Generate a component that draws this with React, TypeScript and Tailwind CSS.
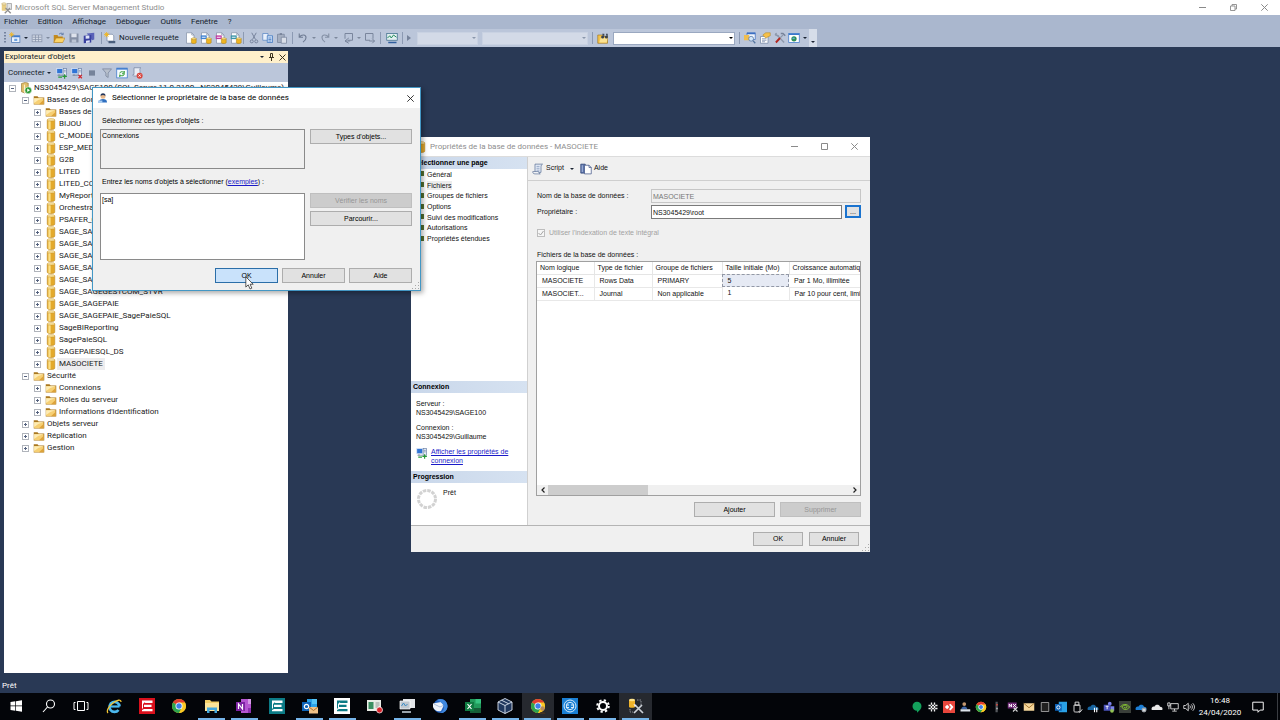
import React from "react";

const UI = "font-['Roboto','Noto_Sans',sans-serif]";
const MS = "font-['Liberation_Sans',Arial,sans-serif]";

function Svg({ children, className = "h-3 w-3" }: { children: React.ReactNode; className?: string }) {
  return (
    <svg viewBox="0 0 16 16" className={`shrink-0 ${className}`} fill="none" aria-hidden="true">
      {children}
    </svg>
  );
}

/* ---------- shared drawings ---------- */

const Cylinder = ({ className = "h-3 w-3" }: { className?: string }) => (
  <Svg className={className}>
    <path d="M3 2.500v11c0 1.200 2 1.800 5 1.800s5-.6 5-1.800v-11z" fill="#e3a92b" stroke="#c08a20" strokeWidth=".8" />
    <path d="M4.500 3.500v11c1 .3 2 .4 3 .4V3.500z" fill="#fbe08a" />
    <ellipse cx="8" cy="2.500" rx="5" ry="1.600" fill="#fdebae" stroke="#c8932a" strokeWidth=".8" />
  </Svg>
);

const Folder = () => (
  <Svg className="h-3 w-3">
    <path d="M1 3h5l1.500 1.500H15V14H1z" fill="#a9771f" />
    <path d="M1.500 5.500H14V13.500H1.500z" fill="#f6cf73" />
    <path d="M1.500 5.500H14L7 8 1.500 12z" fill="#fdebb3" />
    <path d="M8 13.500 14 8v5.500z" fill="#dda33a" />
  </Svg>
);

const ServerIcon = () => (
  <Svg className="h-3 w-3">
    <path d="M2 2l5-1.500 4 1v11l-5 2-4-1.500z" fill="#e0bd68" stroke="#8c6d2b" strokeWidth=".8" />
    <path d="M6 3.500v11" stroke="#fbf0c8" strokeWidth="1.500" />
    <circle cx="11" cy="11" r="4.500" fill="#2d9a35" stroke="#e6f5e2" strokeWidth=".8" />
    <path d="M9.700 8.800 13.300 11l-3.600 2.200z" fill="#fff" />
  </Svg>
);

const Monitors = ({ mark }: { mark: "plus" | "x" }) => (
  <Svg>
    <rect x="1" y="2" width="8" height="7" fill="#2f74d6" stroke="#dfe8f7" />
    <path d="M2 11h7M4 9.500v2" stroke="#6b7b96" />
    <rect x="9.500" y="2" width="4.500" height="9" fill="#e8edf6" stroke="#57709b" strokeWidth=".8" />
    <path d="M10.500 4.500h2.500M10.500 6.500h2.500" stroke="#57709b" strokeWidth=".8" />
    {mark === "plus" ? (
      <path d="M11.500 9.500v6M8.500 12.500h6M3 13.500h5" stroke="#259a35" strokeWidth="1.500" />
    ) : (
      <path d="m10 10.500 4.500 4.500m0-4.500L10 15" stroke="#d3262c" strokeWidth="1.700" />
    )}
  </Svg>
);

const Doc = ({ accent }: { accent?: string }) => (
  <Svg className="h-3 w-3">
    <path d="M2 1h7l3 3v11H2z" fill="#fff" stroke="#8794aa" />
    <path d="M9 1v3h3" stroke="#8794aa" />
    {accent && <path d="M1 4.500h8v5H1z" fill={accent} />}
    {accent && <path d="M2.500 7h5" stroke="#fff" strokeWidth="1.200" />}
    <path d="M8.500 9v5.200c0 .6 1.200 1.100 3.200 1.100s3.200-.5 3.200-1.100V9z" fill="#f0b521" stroke="#a97f16" strokeWidth=".7" />
    <ellipse cx="11.700" cy="9" rx="3.200" ry="1.200" fill="#fde48d" stroke="#a97f16" strokeWidth=".6" />
  </Svg>
);

const Caret = ({ faded = false }: { faded?: boolean }) => (
  <svg viewBox="0 0 4 2" className="h-[2px] w-[4px] shrink-0" aria-hidden="true">
    <path d="M0 0h4L2 2z" fill={faded ? "#7d889c" : "#1b2433"} />
  </svg>
);

/* ---------- toolbar ---------- */

function ToolButton({ label, children }: { label: string; children: React.ReactNode }) {
  return (
    <button type="button" aria-label={label} className="flex h-3 shrink-0 items-center justify-center">
      {children}
    </button>
  );
}

function Combo({ label, className, arrow }: { label: string; className: string; arrow: string }) {
  return (
    <div className="grid items-center">
      <select aria-label={label} className={`col-start-1 row-start-1 h-[13px] appearance-none ${className}`}>
        <option></option>
      </select>
      <svg viewBox="0 0 4 2" className={`pointer-events-none col-start-1 row-start-1 mr-0.5 h-[2px] w-1 justify-self-end ${arrow}`} aria-hidden="true">
        <path d="M0 0h4L2 2z" fill="currentColor" />
      </svg>
    </div>
  );
}

const GROUP = "flex h-3 shrink-0 items-center justify-between border-l border-[#8c9ab3]";

function Toolbar() {
  return (
    <div className="flex h-[18px] shrink-0 items-center overflow-hidden bg-[#aab7ce]">
      <div className="flex h-full items-center bg-[#bbc6da]">
        <div className="flex w-[101px] items-center justify-between pr-[6px] pl-1">
          <svg viewBox="0 0 2 12" className="h-3 w-0.5" aria-hidden="true">
            <path d="M1 0v12" stroke="#5f6e8a" strokeWidth="1.500" strokeDasharray="1.500 1.500" />
          </svg>
          <ToolButton label="Nouveau projet">
            <Svg>
              <rect x="3.500" y="5" width="11" height="9" fill="#eaf1fb" stroke="#4c78b5" />
              <path d="M3.500 6h11" stroke="#3d7bd0" strokeWidth="2" />
              <rect x="7" y="9" width="4" height="3" fill="#6da2e0" />
              <path d="M3.500 0v7M0 3.500h7M1 1l5 5M6 1 1 6" stroke="#f3b61c" />
            </Svg>
          </ToolButton>
          <Caret />
          <ToolButton label="Ajouter un élément">
            <Svg>
              <rect x="1.500" y="4" width="13" height="9" fill="#d3dae6" stroke="#8793aa" />
              <path d="M2 7h12M2 10h12M6 4v9M10 4v9" stroke="#8793aa" />
            </Svg>
          </ToolButton>
          <Caret faded />
          <ToolButton label="Ouvrir">
            <Svg>
              <path d="M1 4h5l1 2h6v8H1z" fill="#c48a1c" />
              <path d="m1 14 3-6h12l-3 6z" fill="#fbd367" stroke="#a9781d" strokeWidth=".7" />
              <path d="M8 3c2-2 4-2 5 0m.5-2v2.500H11" stroke="#49689c" />
            </Svg>
          </ToolButton>
          <ToolButton label="Enregistrer">
            <Svg>
              <path d="M2 2h12v12H2z" fill="#8590a6" />
              <path d="M4.500 2h7v5h-7z" fill="#dde2ec" />
              <path d="M5 10h6v4H5z" fill="#bbc4d4" />
            </Svg>
          </ToolButton>
          <ToolButton label="Enregistrer tout">
            <Svg>
              <path d="m5 2 10-1v9l-3 1z" fill="#5a62b8" />
              <path d="m1 5 10-1v10l-10 1z" fill="#373f9f" />
              <path d="m3.500 5 5-.5v4l-5 .5zM4 11.500l5-.5v3l-5 .5z" fill="#dde2f8" />
            </Svg>
          </ToolButton>
        </div>

        <div className={`${GROUP} w-[142px] pl-0.5`}>
          <button type="button" className="flex items-center gap-[3px] text-[8px] leading-3 whitespace-nowrap text-[#141c2a]">
            <Svg>
              <path d="M4 3h7l2 2v7H4z" fill="#fff" stroke="#7a8aa5" />
              <path d="M6 12v3h9v-3z" fill="#4b5f7e" />
              <path d="M3.500 0v7M0 3.500h7M1 1l5 5M6 1 1 6" stroke="#f3b61c" strokeWidth="1.200" />
            </Svg>
            Nouvelle requête
          </button>
          <div className="flex w-[60px] justify-around">
            <ToolButton label="Requête moteur de base de données"><Doc /></ToolButton>
            <ToolButton label="Requête MDX"><Doc accent="#3f82d2" /></ToolButton>
            <ToolButton label="Requête DMX"><Doc accent="#c03aa2" /></ToolButton>
            <ToolButton label="Requête XMLA"><Doc accent="#3a94a8" /></ToolButton>
          </div>
        </div>

        <div className={`${GROUP} w-[49px] px-1`}>
          <ToolButton label="Couper">
            <Svg>
              <path d="M5 1l5 9M11 1 6 10" stroke="#75829a" strokeWidth="1.300" />
              <circle cx="5" cy="12.500" r="2" stroke="#75829a" strokeWidth="1.300" />
              <circle cx="11" cy="12.500" r="2" stroke="#75829a" strokeWidth="1.300" />
            </Svg>
          </ToolButton>
          <ToolButton label="Copier">
            <Svg>
              <path d="M1 2h7v9H1z" fill="#e7effb" stroke="#5b87c4" />
              <path d="M7 5h7v9H7z" fill="#cfe0f7" stroke="#3e75bf" />
              <path d="M8.500 8h4M8.500 10h4M8.500 12h4" stroke="#3e75bf" />
            </Svg>
          </ToolButton>
          <ToolButton label="Coller">
            <Svg>
              <path d="M2 3h9v11H2z" fill="#a5afc1" stroke="#78849b" />
              <path d="M5 1.500h3V4H5z" fill="#78849b" />
              <path d="M7 7h7v8H7z" fill="#d9dee8" stroke="#78849b" />
            </Svg>
          </ToolButton>
        </div>

        <div className={`${GROUP} w-[88px] px-1`}>
          <ToolButton label="Annuler">
            <Svg><path d="M3 2v5h5M3.500 6.500C6 3 12 3 12 7.500c0 2.500-2 4.500-4 6" stroke="#6f7c94" strokeWidth="1.500" /></Svg>
          </ToolButton>
          <Caret faded />
          <ToolButton label="Rétablir">
            <Svg><path d="M13 2v5H8M12.500 6.500C10 3 4 3 4 7.500c0 2.500 2 4.500 4 6" stroke="#8591a6" strokeWidth="1.500" /></Svg>
          </ToolButton>
          <Caret faded />
          <ToolButton label="Naviguer vers l'arrière">
            <Svg>
              <path d="M4 2h10v9H8" stroke="#78849b" strokeWidth="1.300" />
              <path d="M4 2v7M9 8l-5 4 5 3M4 12h7" stroke="#78849b" strokeWidth="1.300" />
            </Svg>
          </ToolButton>
          <Caret faded />
          <ToolButton label="Naviguer vers l'avant">
            <Svg>
              <path d="M2 2h10v7M2 2v9h6" stroke="#78849b" strokeWidth="1.300" />
              <path d="M7 12h7m-3-3 3 3-3 3" stroke="#78849b" strokeWidth="1.300" />
            </Svg>
          </ToolButton>
        </div>

        <div className={`${GROUP} w-[22px] justify-center`}>
          <ToolButton label="Moniteur d'activité">
            <Svg>
              <rect x="1" y="2" width="14" height="9" fill="#e3f0f1" stroke="#3d6d8b" />
              <path d="M2 8l3-3 2 3 3-4 4 3" stroke="#1f8a5a" strokeWidth="1.300" />
              <path d="M3 14h11" stroke="#2f5e9e" strokeWidth="2" />
            </Svg>
          </ToolButton>
        </div>

        <div className={`${GROUP} w-[190px] pr-1 pl-1`}>
          <ToolButton label="Démarrer">
            <svg viewBox="0 0 4 6" className="h-[6px] w-[4px]" aria-hidden="true"><path d="M0 0l4 3-4 3z" fill="#76839b" /></svg>
          </ToolButton>
          <div className="flex gap-1">
            <Combo label="Configuration" arrow="text-[#8b97ac]" className="w-[61px] border border-[#c9d2e2] bg-[#d3dae7]" />
            <Combo label="Plateforme" arrow="text-[#8b97ac]" className="w-[106px] border border-[#c9d2e2] bg-[#d3dae7]" />
          </div>
        </div>

        <div className={`${GROUP} w-[147px] pr-1 pl-1`}>
          <ToolButton label="Rechercher dans les fichiers">
            <Svg>
              <path d="M1 4h6l1 2h6v9H1z" fill="#f4c34b" stroke="#9a6e17" strokeWidth=".8" />
              <path d="m3 14 2-6h9l-1 6z" fill="#fae293" />
              <circle cx="7.500" cy="6.500" r="2" fill="#39424f" />
              <circle cx="12.500" cy="6.500" r="2" fill="#39424f" />
              <path d="M7 3h2v3M12 3h1.500v3" stroke="#39424f" strokeWidth="1.500" />
            </Svg>
          </ToolButton>
          <Combo label="Rechercher" arrow="text-black" className="w-[122px] border border-[#9aa8c0] bg-white" />
        </div>

        <div className={`${GROUP} w-[70px] pr-0.5 pl-1`}>
          <ToolButton label="Explorateur d'objets">
            <Svg>
              <path d="M4 1h11v9H4z" fill="#f1f5fc" stroke="#3b6fc2" />
              <path d="M4 2h11" stroke="#3b6fc2" strokeWidth="2" />
              <path d="M0 4h7v7H0z" fill="#f0be4f" />
              <circle cx="9.500" cy="9" r="3.200" fill="#d4e8fa" stroke="#54749f" />
              <path d="m12 11.500 3 3.500" stroke="#54749f" strokeWidth="1.700" />
            </Svg>
          </ToolButton>
          <ToolButton label="Fenêtre Propriétés">
            <Svg>
              <path d="M2 6h10v9H2z" fill="#fff" stroke="#7688a5" />
              <path d="M4 9h6M4 11h6M4 13h4" stroke="#7688a5" />
              <path d="M5 4 9 1h6v4L9 8z" fill="#f5c04a" stroke="#b0821f" strokeWidth=".7" />
            </Svg>
          </ToolButton>
          <ToolButton label="Boîte à outils">
            <Svg>
              <path d="m4 4 9.500 10" stroke="#8d98ab" strokeWidth="1.800" />
              <path d="M1 4c0-2 1-3 3-3L3.500 3l1.500 1.500L7 4c0 2-3 3-6 0z" fill="#8d98ab" />
              <path d="M12 4 7 9" stroke="#8d98ab" strokeWidth="1.500" />
              <path d="M8 8 2.500 14" stroke="#b3261f" strokeWidth="2.500" />
              <path d="M9 2h3l3 3" stroke="#77839a" strokeWidth="2" />
            </Svg>
          </ToolButton>
          <ToolButton label="Navigateur web">
            <Svg>
              <rect x="1" y="2" width="14" height="12" fill="#fff" stroke="#3b78cc" />
              <path d="M1 3h14" stroke="#3b78cc" strokeWidth="2" />
              <circle cx="8" cy="9" r="3.500" fill="#2d8f56" />
              <path d="M6 7.500h3v2H6z" fill="#5fb0df" />
            </Svg>
          </ToolButton>
          <Caret />
        </div>
        <button type="button" aria-label="Options de barre d'outils" className="flex h-full w-2 items-end justify-center bg-[#d6dde9] pb-1">
          <Caret />
        </button>
      </div>
    </div>
  );
}

/* ---------- object explorer ---------- */

type Kind = "server" | "folder" | "db";
type Node = { level: 0 | 1 | 2; open?: boolean; kind: Kind; label: string; selected?: boolean };

const TREE: Node[] = [
  { level: 0, open: true, kind: "server", label: "NS3045429\\SAGE100 (SQL Server 11.0.2100 - NS3045429\\Guillaume)" },
  { level: 1, open: true, kind: "folder", label: "Bases de données" },
  { level: 2, kind: "folder", label: "Bases de données système" },
  { level: 2, kind: "db", label: "BIJOU" },
  { level: 2, kind: "db", label: "C_MODEL" },
  { level: 2, kind: "db", label: "ESP_MED" },
  { level: 2, kind: "db", label: "G2B" },
  { level: 2, kind: "db", label: "LITED" },
  { level: 2, kind: "db", label: "LITED_CO" },
  { level: 2, kind: "db", label: "MyReport" },
  { level: 2, kind: "db", label: "Orchestra" },
  { level: 2, kind: "db", label: "PSAFER_C" },
  { level: 2, kind: "db", label: "SAGE_SAGE" },
  { level: 2, kind: "db", label: "SAGE_SAGE" },
  { level: 2, kind: "db", label: "SAGE_SAGE" },
  { level: 2, kind: "db", label: "SAGE_SAGE" },
  { level: 2, kind: "db", label: "SAGE_SAGE" },
  { level: 2, kind: "db", label: "SAGE_SAGEGESTCOM_STVR" },
  { level: 2, kind: "db", label: "SAGE_SAGEPAIE" },
  { level: 2, kind: "db", label: "SAGE_SAGEPAIE_SagePaieSQL" },
  { level: 2, kind: "db", label: "SageBIReporting" },
  { level: 2, kind: "db", label: "SagePaieSQL" },
  { level: 2, kind: "db", label: "SAGEPAIESQL_DS" },
  { level: 2, kind: "db", label: "MASOCIETE", selected: true },
  { level: 1, open: true, kind: "folder", label: "Sécurité" },
  { level: 2, kind: "folder", label: "Connexions" },
  { level: 2, kind: "folder", label: "Rôles du serveur" },
  { level: 2, kind: "folder", label: "Informations d'identification" },
  { level: 1, kind: "folder", label: "Objets serveur" },
  { level: 1, kind: "folder", label: "Réplication" },
  { level: 1, kind: "folder", label: "Gestion" },
];

const INDENT = ["pl-[5px]", "pl-[18px]", "pl-[30px]"];

function TreeRow({ node }: { node: Node }) {
  return (
    <li
      role="treeitem"
      aria-level={node.level + 1}
      aria-expanded={!!node.open}
      aria-selected={!!node.selected}
      className={`flex h-3 items-center overflow-hidden ${INDENT[node.level]}`}
    >
      <svg viewBox="0 0 7 7" className="mr-1 h-[7px] w-[7px] shrink-0" aria-hidden="true">
        <rect x=".5" y=".5" width="6" height="6" fill="#fff" stroke="#b0b4bb" />
        <path d={node.open ? "M2 3.500h3" : "M2 3.500h3M3.500 2v3"} stroke="#56637f" />
      </svg>
      {node.kind === "server" ? <ServerIcon /> : node.kind === "folder" ? <Folder /> : <Cylinder />}
      <span className={`px-0.5 leading-3 whitespace-nowrap ${node.selected ? "bg-[#ededef]" : ""}`}>{node.label}</span>
    </li>
  );
}

function ObjectExplorer() {
  return (
    <section aria-label="Explorateur d'objets" className="flex w-[284px] shrink-0 flex-col text-[8px] text-[#1a1a1a]">
      <header className="flex h-3 shrink-0 items-center bg-[#fff0cb] pr-0.5 pl-px">
        <h2 className="flex-1 leading-3 text-[#141c2a]">Explorateur d'objets</h2>
        <div className="flex items-center gap-1">
          <button type="button" aria-label="Position de la fenêtre"><Caret /></button>
          <button type="button" aria-label="Masquer automatiquement">
            <svg viewBox="0 0 7 8" className="h-2 w-[7px]" aria-hidden="true">
              <path d="M2.500.5h2v4h-2zM1 4.500h5M3.500 4.500V8" stroke="#3c3420" fill="none" />
            </svg>
          </button>
          <button type="button" aria-label="Fermer">
            <svg viewBox="0 0 7 7" className="h-[7px] w-[7px]" aria-hidden="true"><path d="m.5.5 6 6m0-6-6 6" stroke="#3c3420" /></svg>
          </button>
        </div>
      </header>
      <div className="flex h-[19px] shrink-0 items-center gap-[3px] bg-[#bbc6da] px-1 pt-px">
        <button type="button" className="mr-0.5 flex items-center gap-0.5 leading-3 text-[#141c2a]">Connecter <Caret /></button>
        <ToolButton label="Connecter l'Explorateur"><Monitors mark="plus" /></ToolButton>
        <ToolButton label="Déconnecter"><Monitors mark="x" /></ToolButton>
        <ToolButton label="Arrêter"><Svg><rect x="4" y="4.500" width="8" height="7" fill="#76839a" /></Svg></ToolButton>
        <ToolButton label="Filtrer"><Svg><path d="M2 2.500h12L9.500 8v6l-3-2V8z" fill="#b7bfcc" stroke="#78849b" /></Svg></ToolButton>
        <ToolButton label="Actualiser">
          <Svg>
            <rect x="1" y="1.500" width="14" height="13" fill="#f6fbff" stroke="#3b78cc" />
            <path d="M1 2.500h14" stroke="#3b78cc" strokeWidth="2" />
            <path d="M5 8.500c0-2 3-3 5-1.500l1-1.500V9H8M11 9.500c0 2-3 3-5 1.500L5 13v-3" stroke="#2f9a2f" strokeWidth="1.300" />
          </Svg>
        </ToolButton>
        <ToolButton label="Script">
          <Svg>
            <path d="M4 1h9c-2 1-1 3-1 5v6H4c-2 0-2-2-1-2h1z" fill="#e8edf5" stroke="#7786a1" />
            <circle cx="11.500" cy="11.500" r="4" fill="#d8463e" />
            <path d="m10 10 3 3m0-3-3 3" stroke="#fff" strokeWidth="1.200" />
          </Svg>
        </ToolButton>
      </div>
      <ul role="tree" className="flex-1 overflow-hidden bg-white">
        {TREE.map((n, i) => <TreeRow key={i} node={n} />)}
      </ul>
    </section>
  );
}

/* ---------- dialogs ---------- */

const BTN = "border border-[#adadad] bg-[#e1e1e1] text-center leading-[10px] text-black";
const BTN_OFF = "border border-[#bfbfbf] bg-[#cccccc] text-center leading-[10px] text-[#969696]";

const Grip = () => (
  <svg viewBox="0 0 8 8" className="h-2 w-2" aria-hidden="true">
    <path d="M6 0h1v1H6zM3 3h1v1H3zM6 3h1v1H6zM0 6h1v1H0zM3 6h1v1H3zM6 6h1v1H6z" fill="#a9a9a9" />
  </svg>
);

function OwnerDialog() {
  return (
    <div role="dialog" aria-label="Sélectionner le propriétaire" className="absolute top-10 left-[92px] flex w-[329px] flex-col border border-[#4397c4] bg-[#f0f0f0] text-[7px] shadow-[2px_2px_5px_rgba(0,0,0,0.35)]">
      <div className={`flex h-5 items-center gap-1 bg-white px-[5px] ${UI}`}>
        <Svg className="h-[10px] w-[10px]">
          <circle cx="8" cy="5" r="4" fill="#e9b98c" />
          <path d="M4 4.500C4 1.500 6 .5 8 .5s4 1 4 4L8 3z" fill="#23365c" />
          <path d="M1.500 15c0-4 3-5.500 6.500-5.500s6.500 1.500 6.500 5.500z" fill="#2f6fc0" />
          <path d="M0 12h7v4H0z" fill="#a9cdf2" />
        </Svg>
        <h2 className="flex-1 text-[8px] leading-3 whitespace-nowrap text-black">Sélectionner le propriétaire de la base de données</h2>
        <button type="button" aria-label="Fermer" className="mr-px">
          <svg viewBox="0 0 7 7" className="h-[7px] w-[7px]" aria-hidden="true"><path d="m.3.3 6.400 6.400m0-6.400L.3 6.700" stroke="#222" strokeWidth=".9" /></svg>
        </button>
      </div>
      <div className={`px-[7px] pt-2 ${MS}`}>
        <label htmlFor="types" className="block h-[13px] pl-0.5 leading-[10px]">Sélectionnez ces types d'objets :</label>
        <div className="flex items-start gap-[5px]">
          <textarea id="types" readOnly defaultValue="Connexions" className="block h-10 w-[205px] resize-none border border-[#8a8a8a] bg-[#f0f0f0] px-px pt-px leading-[10px]" />
          <button type="button" className={`${BTN} h-[15px] w-[102px]`}>Types d'objets...</button>
        </div>
        <div className="mt-2 h-4 pl-0.5 leading-[10px]">
          <label htmlFor="names">Entrez les noms d'objets à sélectionner (</label>
          <a href="#exemples" className="text-[#1a1ac8] underline">exemples</a>) :
        </div>
        <div className="flex items-start gap-[5px]">
          <textarea id="names" defaultValue="[sa]" className="block h-[67px] w-[205px] resize-none border border-[#8a8a8a] bg-white px-px pt-px leading-[10px]" />
          <div className="flex flex-col gap-[3px]">
            <button type="button" disabled className={`${BTN_OFF} h-[15px] w-[102px]`}>Vérifier les noms</button>
            <button type="button" className={`${BTN} h-[15px] w-[102px]`}>Parcourir...</button>
          </div>
        </div>
        <div className="mt-2 flex justify-end gap-1 pr-px pb-[7px]">
          <button type="button" className="h-[15px] w-[63px] border border-[#2b6ea8] bg-[#c9e2fb] text-center leading-[10px] text-black">OK</button>
          <button type="button" className={`${BTN} h-[15px] w-[63px]`}>Annuler</button>
          <button type="button" className={`${BTN} h-[15px] w-[63px]`}>Aide</button>
        </div>
      </div>
      <div className="absolute right-0 bottom-0"><Grip /></div>
      <svg viewBox="0 0 12 19" className="absolute top-[188px] left-[152px] h-[14px] w-[9px]" aria-hidden="true">
        <path d="M1 1v14l3.300-3 2.400 5.600 2.500-1.100-2.400-5.300H11z" fill="#fff" stroke="#222" />
      </svg>
    </div>
  );
}

const PAGES = ["Général", "Fichiers", "Groupes de fichiers", "Options", "Suivi des modifications", "Autorisations", "Propriétés étendues"];
const HEADS = ["Nom logique", "Type de fichier", "Groupe de fichiers", "Taille initiale (Mo)", "Croissance automatique"];
const ROWS = [
  ["MASOCIETE", "Rows Data", "PRIMARY", "5", "Par 1 Mo, illimitée"],
  ["MASOCIET...", "Journal", "Non applicable", "1", "Par 10 pour cent, limitée"],
];
const SECTION = "h-3 shrink-0 bg-linear-to-r from-[#c9d7ea] to-[#d6e2f1] pl-0.5 font-bold leading-3 text-black";

function PropertiesDialog() {
  return (
    <div role="dialog" aria-label="Propriétés de la base de données" className={`absolute top-[90px] left-[411px] flex h-[415px] w-[459px] flex-col bg-[#f0f0f0] text-[7px] text-[#111] ${MS}`}>
      <div className={`flex h-5 shrink-0 items-center border-b border-[#dcdcdc] bg-white pr-3 pl-[4px] ${UI}`}>
        <Cylinder />
        <h2 className="flex-1 pl-[3px] text-[8px] leading-3 whitespace-nowrap text-[#8e8e8e]">Propriétés de la base de données - MASOCIETE</h2>
        <div className="flex items-center gap-[23px]">
          <button type="button" aria-label="Réduire"><svg viewBox="0 0 7 7" className="h-[7px] w-[7px]" aria-hidden="true"><path d="M0 3.500h7" stroke="#8a8a8a" /></svg></button>
          <button type="button" aria-label="Agrandir"><svg viewBox="0 0 7 7" className="h-[7px] w-[7px]" aria-hidden="true"><path d="M.5.5h6v6h-6z" fill="none" stroke="#8a8a8a" /></svg></button>
          <button type="button" aria-label="Fermer"><svg viewBox="0 0 7 7" className="h-[7px] w-[7px]" aria-hidden="true"><path d="m.3.3 6.400 6.400m0-6.400L.3 6.700" stroke="#8a8a8a" /></svg></button>
        </div>
      </div>

      <div className="flex min-h-0 flex-1 border-b border-[#b4b4b4]">
        <nav aria-label="Sélectionner une page" className="flex w-[117px] shrink-0 flex-col border-r border-[#d0d0d0] bg-white">
          <h3 className={SECTION}>Sélectionner une page</h3>
          <ul className="flex h-[75px] shrink-0 flex-col">
            {PAGES.map((p) => (
              <li key={p} className="flex flex-1 items-center gap-[3px] pl-[5px]">
                <svg viewBox="0 0 8 8" className="h-2 w-2" aria-hidden="true">
                  <path d="M0 1h8v5H0z" fill="#55702f" /><path d="M1 2h4v2H1z" fill="#c9d68b" /><path d="M0 6h4v1H0z" fill="#8a8a5a" />
                </svg>
                <button type="button" className={`leading-[9px] ${p === "Fichiers" ? "bg-[#ececec]" : ""}`}>{p}</button>
              </li>
            ))}
          </ul>
          <div className="flex-1" />
          <h3 className={SECTION}>Connexion</h3>
          <div className="h-[78px] shrink-0 pt-[6px] pl-[5px] leading-[9px]">
            <p>Serveur :<br />NS3045429\SAGE100</p>
            <p className="mt-[6px]">Connexion :<br />NS3045429\Guillaume</p>
            <div className="mt-[6px] flex items-start gap-[3px]">
              <Monitors mark="plus" />
              <a href="#connexion" className="w-[90px] text-[#1a1ac8] underline">Afficher les propriétés de connexion</a>
            </div>
          </div>
          <h3 className={SECTION}>Progression</h3>
          <div className="flex h-[42px] shrink-0 items-start gap-[5px] pt-[5px] pl-[5px]">
            <svg viewBox="0 0 22 22" className="h-[22px] w-[22px]" aria-hidden="true">
              <circle cx="11" cy="11" r="8.500" fill="none" stroke="#d2d2d2" strokeWidth="3" strokeDasharray="3.450 1" />
            </svg>
            <span className="leading-[10px]">Prêt</span>
          </div>
        </nav>

        <div className="flex min-w-0 flex-1 flex-col">
          <div className="flex h-6 shrink-0 items-center gap-1 border-b border-[#cfcfcf] pl-1">
            <button type="button" className="flex items-center gap-0.5">
              <Svg>
                <path d="M4 1.500h10c-2 1-2 3-2 5v6H4z" fill="#e6edf8" stroke="#5e7398" />
                <path d="M1 11.500h8c0 2 1 3 2 3H4c-2 0-3-1-3-3z" fill="#fff" stroke="#5e7398" />
                <path d="M6 4.500h4M6 7h4M6 9.500h4" stroke="#7e93b7" />
              </Svg>
              Script
            </button>
            <button type="button" aria-label="Options de script" className="px-0.5"><Caret /></button>
            <button type="button" className="flex items-center gap-0.5">
              <Svg>
                <path d="M1 1.500h6v12H1z" fill="#5a73aa" stroke="#354a7a" />
                <path d="M6 3h6l3 3v8.500H6z" fill="#fff" stroke="#46588a" />
                <path d="M12 3v3h3" stroke="#46588a" />
                <path d="M3 3v9" stroke="#c9d4ee" />
              </Svg>
              Aide
            </button>
          </div>

          <div className="flex min-h-0 flex-1 flex-col pt-2 pr-[9px] pb-2 pl-2">
            <div className="grid grid-cols-[115px_1fr] items-center gap-y-0.5 leading-[10px]">
              <label htmlFor="nom" className="pl-px">Nom de la base de données :</label>
              <input id="nom" readOnly defaultValue="MASOCIETE" className="h-[14px] min-w-0 border border-[#c6c6c6] bg-[#f0f0f0] px-px text-[#777]" />
              <label htmlFor="owner" className="pl-px">Propriétaire :</label>
              <div className="flex min-w-0 gap-[3px]">
                <input id="owner" defaultValue="NS3045429\root" className="h-[14px] min-w-0 flex-1 border border-[#7a7a7a] bg-white px-px" />
                <button type="button" aria-label="Parcourir" className="h-[13px] w-4 border-2 border-[#1a73cf] bg-[#e1e1e1] leading-[6px]">...</button>
              </div>
            </div>
            <label className="mt-[9px] flex items-center gap-[3px] leading-[10px] text-[#a2a2a2]">
              <span className="grid h-[10px] w-[10px] place-items-center">
                <input type="checkbox" defaultChecked disabled className="col-start-1 row-start-1 h-2 w-2 appearance-none border border-[#bdbdbd] bg-[#f6f6f6]" />
                <svg viewBox="0 0 8 8" className="col-start-1 row-start-1 h-2 w-2" aria-hidden="true"><path d="m1.500 4 2 2 3-4" fill="none" stroke="#a5a5a5" /></svg>
              </span>
              Utiliser l'indexation de texte intégral
            </label>
            <h3 className="mt-3 pl-px leading-[10px]">Fichiers de la base de données :</h3>
            <div className="mt-px flex min-h-0 flex-1 flex-col overflow-hidden border border-[#a0a0a0] bg-white">
              <div className="min-h-0 flex-1 overflow-hidden">
                <table className="w-[372px] table-fixed border-collapse text-left leading-[10px]">
                  <colgroup>
                    <col className="w-[57px]" /><col className="w-[58px]" /><col className="w-[70px]" /><col className="w-[67px]" /><col className="w-[120px]" />
                  </colgroup>
                  <thead>
                    <tr>{HEADS.map((h) => <th key={h} className="h-3 border-r border-b border-[#e5e5e5] p-0 pl-[3px] font-normal whitespace-nowrap">{h}</th>)}</tr>
                  </thead>
                  <tbody>
                    {ROWS.map((r) => (
                      <tr key={r[0]}>
                        {r.map((c, i) => (
                          <td key={i} className={c === "5" ? "h-[13px] bg-[#e6eaf4] p-0 pl-[5px] outline outline-dashed outline-[#9298a6] -outline-offset-1" : "h-[13px] border-r border-b border-[#e8e8e8] p-0 pl-[5px] whitespace-nowrap"}>{c}</td>
                        ))}
                      </tr>
                    ))}
                  </tbody>
                </table>
              </div>
              <div className="flex h-[10px] shrink-0 items-center bg-[#f0f0f0]">
                <button type="button" aria-label="Défiler à gauche" className="flex w-[11px] justify-center"><svg viewBox="0 0 4 6" className="h-[6px] w-1" aria-hidden="true"><path d="M3.500.5 1 3l2.500 2.500" fill="none" stroke="#222" strokeWidth="1.200" /></svg></button>
                <div className="flex h-full flex-1"><div className="w-1/3 bg-[#cdcdcd]" /></div>
                <button type="button" aria-label="Défiler à droite" className="flex w-[11px] justify-center"><svg viewBox="0 0 4 6" className="h-[6px] w-1" aria-hidden="true"><path d="M.5.5 3 3 .5 5.500" fill="none" stroke="#222" strokeWidth="1.200" /></svg></button>
              </div>
            </div>
            <div className="mt-[6px] flex justify-end gap-[5px]">
              <button type="button" className={`${BTN} h-[15px] w-[81px]`}>Ajouter</button>
              <button type="button" disabled className={`${BTN_OFF} h-[15px] w-[81px]`}>Supprimer</button>
            </div>
          </div>
        </div>
      </div>

      <div className="flex h-[26px] shrink-0 items-center justify-end gap-[6px] pr-[11px]">
        <button type="button" className={`${BTN} h-[14px] w-[50px]`}>OK</button>
        <button type="button" className={`${BTN} h-[14px] w-[50px]`}>Annuler</button>
      </div>
      <div className="absolute right-0 bottom-0"><Grip /></div>
    </div>
  );
}

/* ---------- taskbar ---------- */

const ChromeMark = () => (
  <>
    <circle cx="8" cy="8" r="7" fill="#fbc924" />
    <path d="M8 8 1.940 4.500A7 7 0 0 1 14.060 4.500z" fill="#e23d30" />
    <path d="M8 8 1.940 4.500A7 7 0 0 0 8 15l3-5z" fill="#2da44e" />
    <path d="M8 4.500h6A7 7 0 0 1 8 15l3-5.500z" fill="#fbc924" />
    <circle cx="8" cy="8" r="3.500" fill="#fff" />
    <circle cx="8" cy="8" r="2.700" fill="#3f7fe8" />
  </>
);

const Ebars = ({ bg, fg }: { bg: string; fg: string }) => (
  <>
    <rect width="16" height="16" fill={bg} />
    <path d="M3 2.500h10.500V5H6.500L4.500 4zM5 6.700h7.500v2.300H5zM3 13.200V12l2-1h8.500v2.200zM3 2.500h2V5L4 6v4l-1 1z" fill={fg} />
  </>
);

type Task = { name: string; running?: boolean; active?: boolean; art: React.ReactNode };

const TASKS: Task[] = [
  { name: "Démarrer", art: <path d="M2.500 4 7.300 3.300v4.300H2.500zM8 3.200l6-.9v5.300H8zM2.500 8.300h4.800v4.400L2.500 12zM8 8.300h6v5.400l-6-.9z" fill="#fff" /> },
  { name: "Rechercher", art: <><circle cx="9.500" cy="6" r="4" stroke="#fff" strokeWidth="1.100" /><path d="M6.500 9 2 14" stroke="#fff" strokeWidth="1.100" /></> },
  { name: "Vue des tâches", art: <path d="M4.500 3.500h7v9h-7zM2.500 4.500H1v7h1.500M13.500 4.500H15v7h-1.500" stroke="#fff" /> },
  { name: "Internet Explorer", art: <><path d="M13.500 8.500a5 5 0 1 0-1 3.500" stroke="#4cb9ee" strokeWidth="2.700" /><path d="M4 8.500h9.500" stroke="#4cb9ee" strokeWidth="2.200" /><path d="M2 15c-2-2 1-7 5-10s8-4 8-1" stroke="#f3c534" strokeWidth="1.300" /></> },
  { name: "Sage rouge", art: <Ebars bg="#d9101c" fg="#fff" /> },
  { name: "Chrome", art: <ChromeMark /> },
  { name: "Explorateur de fichiers", running: true, art: <><path d="M1 2h5l1.500 1.500H15V13H1z" fill="#f1ce67" /><path d="M1 5h14v8H1z" fill="#fbe59a" /><path d="M3 9.500h10V15h-2.500v-3h-5v3H3z" fill="#43a8dd" /></> },
  { name: "OneNote", running: true, art: <><path d="M5 1h10v14H5z" fill="#b556d1" /><path d="M12 1h3v5h-3z" fill="#d79ae8" /><path d="M12 10h3v5h-3z" fill="#8b2fae" /><path d="M0 4h9v9H0z" fill="#7d22a3" /><path d="M2.500 11V6l4 5V6" stroke="#fff" strokeWidth="1.200" /></> },
  { name: "Sage vert", art: <Ebars bg="#0c7b86" fg="#fff" /> },
  { name: "Outlook", running: true, art: <><path d="M5 1h10v11H5z" fill="#2aa1e6" /><path d="M10 1h5v5h-5z" fill="#55c4f6" /><path d="M0 4h9v9H0z" fill="#0d63b8" /><circle cx="4.500" cy="8.500" r="2.200" stroke="#fff" strokeWidth="1.200" /><path d="M7 9h9v6.500H7z" fill="#f0c187" /><path d="m7 9 4.500 3.500L16 9" stroke="#a8712e" /></> },
  { name: "Sage blanc", running: true, art: <Ebars bg="#fff" fg="#0c7b86" /> },
  { name: "Enregistreur", art: <><path d="M0 2h14v11H0z" fill="#e9ece6" /><path d="M1.500 4h5v7h-5z" fill="#3c8f62" /><path d="M8.500 5h4M8.500 7h4M8.500 9h3" stroke="#8d9994" /><circle cx="12.500" cy="12" r="3" fill="#d9232b" stroke="#fff" strokeWidth=".7" /></> },
  { name: "Gestion serveur", running: true, art: <><path d="M4 1h12v9H4z" fill="#e3e6e9" /><path d="M1 3h10v8H1z" fill="#c0c8cf" stroke="#fff" strokeWidth=".7" /><path d="m2.500 8 2-3 2 3 2-2" stroke="#3c8dc7" /><path d="M3 13h9v2H3z" fill="#9aa3ab" /></> },
  { name: "Thunderbird", art: <><circle cx="8.500" cy="8" r="7" fill="#2563bd" /><path d="M1 5.500 9 4l3 3-3 6c-4 1-7-1-8-4z" fill="#eef3fa" /><path d="m2 6 6 3 4-2" stroke="#9fb4d3" strokeWidth=".8" /><path d="M5 2c5-3 11 1 10.500 7-.5 4-4 6.500-7 6 5-3 5-9-3.500-13z" fill="#3f87dd" /></> },
  { name: "Excel", running: true, art: <><path d="M5 1h11v14H5z" fill="#219a5b" /><path d="M10.500 1H16v4.500h-5.500z" fill="#37c481" /><path d="M5 10h11v5H5z" fill="#155f38" /><path d="M0 4h9v9H0z" fill="#0f7a41" /><path d="m2.500 6 4 5m0-5-4 5" stroke="#fff" strokeWidth="1.200" /></> },
  { name: "VirtualBox", running: true, art: <><path d="M8 .5 15 4v8l-7 3.500L1 12V4z" fill="#20375d" stroke="#dbe4f1" strokeWidth=".9" /><path d="m1 4 7 3.500L15 4M8 7.500v8M4.500 2.200l7 3.500" stroke="#dbe4f1" strokeWidth=".9" /></> },
  { name: "Chrome profil", running: true, active: true, art: <><ChromeMark /><circle cx="12.500" cy="10.500" r="2.200" fill="#b98c5c" /><path d="M9.500 16c0-3 6-3 6 0z" fill="#3e3226" /></> },
  { name: "TeamViewer", running: true, art: <><rect width="16" height="16" fill="#1a80d5" /><circle cx="8" cy="8" r="6" stroke="#d7ebfb" /><circle cx="8" cy="8" r="3.700" stroke="#d7ebfb" /><path d="M4 7h3M9 7h3M4 9.500h3M9 9.500h3" stroke="#d7ebfb" /></> },
  { name: "Paramètres", running: true, art: <><circle cx="8" cy="8" r="4" stroke="#fff" strokeWidth="2" /><circle cx="8" cy="8" r="5.800" stroke="#fff" strokeWidth="2" strokeDasharray="2.280 2.280" /></> },
  { name: "SQL Server Management Studio", running: true, active: true, art: <><path d="M1 2v7c0 1 6 1 6 0V2z" fill="#efb32a" /><ellipse cx="4" cy="2" rx="3" ry="1.200" fill="#fde38b" /><path d="M9 2h4v5M2 11v3h3" stroke="#8a8f95" strokeDasharray="1.500 1" /><path d="m6 15 8-8M7 7l8 8" stroke="#cdd2d8" strokeWidth="1.700" /><path d="m5.500 6 3 1-1.500 2z" fill="#eef" /></> },
];

const Cloud = ({ fill }: { fill: string }) => <path d="M1 12c-1-3 1-5 3.500-4.500C6 4 11 4 12 7.500c3 0 4 2 3 4.500z" fill={fill} />;

const TRAY: { name: string; art: React.ReactNode }[] = [
  { name: "Hangouts", art: <path d="M8 1a6 6 0 0 1 6 6c0 4-3 6-6 8.500V13A6 6 0 1 1 8 1z" fill="#13a05b" /> },
  { name: "Slack", art: <path d="M6 2v12M10 2v12M2 6h12M2 10h12" stroke="#f1f1f1" strokeWidth="1.800" strokeDasharray="3 1.500" /> },
  { name: "AnyDesk", art: <><rect width="16" height="16" fill="#e8463c" /><path d="m2.500 8 3-3 3 3-3 3zM8 5l2-1.500L14 8l-4 4.500L8 11l2.500-3z" fill="#fff" /></> },
  { name: "Sauvegarde", art: <><circle cx="7" cy="4" r="2.500" fill="#c4986f" /><path d="M3 11c0-5 8-5 8 0z" fill="#3f66a6" /><path d="M2 11h13v3H2z" fill="#dde3ea" /></> },
  { name: "Chrome", art: <ChromeMark /> },
  { name: "Activité", art: <><path d="M6 1h3v14H6z" fill="#55585c" /><path d="M7 4h2v2H7z" fill="#e3473c" /><path d="M7 9h2v2H7z" fill="#b9bbbd" /></> },
  { name: "Réseau NX", art: <><path d="M1 2h12v8H1z" fill="#732d7a" /><path d="M3 8V4l3 4V4M8 4l4 4m0-4L8 8" stroke="#fff" strokeWidth="1.200" /><path d="m8 14 6-6M9 9l5 5" stroke="#d8d8d8" strokeWidth="1.500" /></> },
  { name: "Courrier", art: <><path d="M1 3h14v10H1z" fill="#f4d69a" /><path d="m1 3 7 6 7-6" stroke="#a06f28" strokeWidth="1.200" /></> },
  { name: "Périphérique", art: <path d="M3 2h10v12H3z" fill="#202020" stroke="#bcbcbc" /> },
  { name: "Outlook", art: <><path d="M5 1h11v14H5z" fill="#2aa1e6" /><path d="M0 4h9v9H0z" fill="#0d63b8" /><circle cx="4.500" cy="8.500" r="2.200" stroke="#fff" strokeWidth="1.200" /></> },
  { name: "USB", art: <path d="M5.500 1.500h5v4h-5zM4 5.500h8V14c0 1-8 1-8 0zM10 14l2 1 3-4" stroke="#e5e5e5" strokeWidth="1.200" /> },
  { name: "Synchronisation", art: <><Cloud fill="#17649f" /><path d="M10 9v6M13 9v6" stroke="#fff" strokeWidth="1.500" /></> },
  { name: "Teams", art: <><circle cx="9" cy="3.500" r="2.500" fill="#7b83eb" /><path d="M1 5h9v8H1z" fill="#4b53bc" /><path d="M3.500 7h4M5.500 7v4" stroke="#fff" strokeWidth="1.200" /><path d="M10 7h5v6h-5z" fill="#7b83eb" /><circle cx="12" cy="13" r="2.500" fill="#92c353" /></> },
  { name: "NVIDIA", art: <><rect width="16" height="16" fill="#3a3f3a" /><path d="M2 8c2-4 9-5 12 0-3 5-9 4-10 0 2-3 6-3 7 0-2 2-4 2-4 0" stroke="#86c232" strokeWidth="1.300" /></> },
  { name: "OneDrive entreprise", art: <><Cloud fill="#1c7fd6" /><circle cx="12" cy="12" r="3.300" fill="#9aa0a6" /><path d="M11 10.500v3M13 10.500v3" stroke="#fff" /></> },
  { name: "OneDrive", art: <Cloud fill="#e9e9e9" /> },
  { name: "Réseau", art: <path d="M5 3.500h10v7H5zM10 10.500V13M7 13.500h6M1 2.500h3v4H1zM2.500 6.500V11" stroke="#f1f1f1" strokeWidth="1.100" /> },
  { name: "Volume", art: <path d="M1 6h2.500L7 3v10l-3.500-3H1zM9 6c1 1 1 3 0 4M11 4.500c2 2 2 5 0 7M13 3c3 3 3 7 0 10" stroke="#f1f1f1" strokeWidth="1.100" /> },
];

function Taskbar() {
  return (
    <footer className="flex h-[27px] shrink-0 items-stretch justify-between bg-[#030509]">
      <div className="flex w-[652px]">
        {TASKS.map((t) => (
          <button key={t.name} type="button" aria-label={t.name} className={`flex min-w-0 flex-1 flex-col items-center ${t.active ? "bg-[#26292f]" : ""}`}>
            <span className="flex flex-1 items-center"><Svg className="h-4 w-4">{t.art}</Svg></span>
            <span className={`h-0.5 w-[27px] ${t.running ? "bg-[#76b5ea]" : ""}`} />
          </button>
        ))}
      </div>
      <div className="flex items-center">
        <div className="flex">
          {TRAY.map((t) => (
            <button key={t.name} type="button" aria-label={t.name} className="flex w-4 justify-center">
              <Svg className="h-3 w-3">{t.art}</Svg>
            </button>
          ))}
        </div>
        <div className="w-[46px] text-center text-[8px] leading-3 text-white">
          <div>16:48</div>
          <div>24/04/2020</div>
        </div>
        <button type="button" aria-label="Centre de notifications" className="mr-3 ml-2">
          <Svg className="h-[14px] w-[14px]"><path d="M2 2.500h12v9h-3.500L8 14v-2.500H2z" stroke="#fff" strokeWidth="1.100" /></Svg>
        </button>
        <div className="mr-0.5 h-full w-px bg-[#3a3d42]" />
      </div>
    </footer>
  );
}

/* ---------- application ---------- */

export default function App() {
  return (
    <div className={`flex h-screen flex-col overflow-hidden bg-[#293955] ${UI}`}>
      <header className="flex h-[15px] shrink-0 items-center bg-white pl-px">
        <Svg className="h-3 w-3">
          <path d="M1 2v9c0 1 6 1 6 0V2z" fill="#e8cd83" /><ellipse cx="4" cy="2.500" rx="3" ry="1.500" fill="#f6e6b8" stroke="#b59f63" strokeWidth=".6" />
          <path d="M8 2h6v8H8z" fill="#e2e4e6" stroke="#9c9c9c" /><path d="m5 15 7-7M6 8l7 7" stroke="#8e8e8e" strokeWidth="1.700" />
        </Svg>
        <h1 className="flex-1 pl-0.5 text-[8px] leading-3 text-[#8e8e8e]">Microsoft SQL Server Management Studio</h1>
        <div className="flex items-center gap-6 pr-3">
          <button type="button" aria-label="Réduire"><svg viewBox="0 0 7 7" className="h-[7px] w-[7px]" aria-hidden="true"><path d="M0 3.500h7" stroke="#8a8a8a" /></svg></button>
          <button type="button" aria-label="Niveau inférieur"><svg viewBox="0 0 7 7" className="h-[7px] w-[7px]" aria-hidden="true"><path d="M.5 2h4.500v4.500H.5zM2 2V.5h4.500V5H5" fill="none" stroke="#8a8a8a" strokeWidth=".9" /></svg></button>
          <button type="button" aria-label="Fermer"><svg viewBox="0 0 7 7" className="h-[7px] w-[7px]" aria-hidden="true"><path d="m.3.3 6.400 6.400m0-6.400L.3 6.700" stroke="#8a8a8a" /></svg></button>
        </div>
      </header>
      <nav aria-label="Menu" className="flex h-[14px] shrink-0 items-center gap-[10px] bg-[#aab7ce] pl-1 text-[8px] leading-3 text-[#141c2a]">
        {["Fichier", "Edition", "Affichage", "Déboguer", "Outils", "Fenêtre", "?"].map((m) => <button key={m} type="button">{m}</button>)}
      </nav>
      <Toolbar />
      <main className="relative flex min-h-0 flex-1 overflow-hidden pt-1 pb-[5px] pl-1">
        <ObjectExplorer />
        <PropertiesDialog />
        <OwnerDialog />
      </main>
      <div className="flex h-[15px] shrink-0 items-center pl-0.5 text-[8px] leading-3 text-white">Prêt</div>
      <Taskbar />
    </div>
  );
}
